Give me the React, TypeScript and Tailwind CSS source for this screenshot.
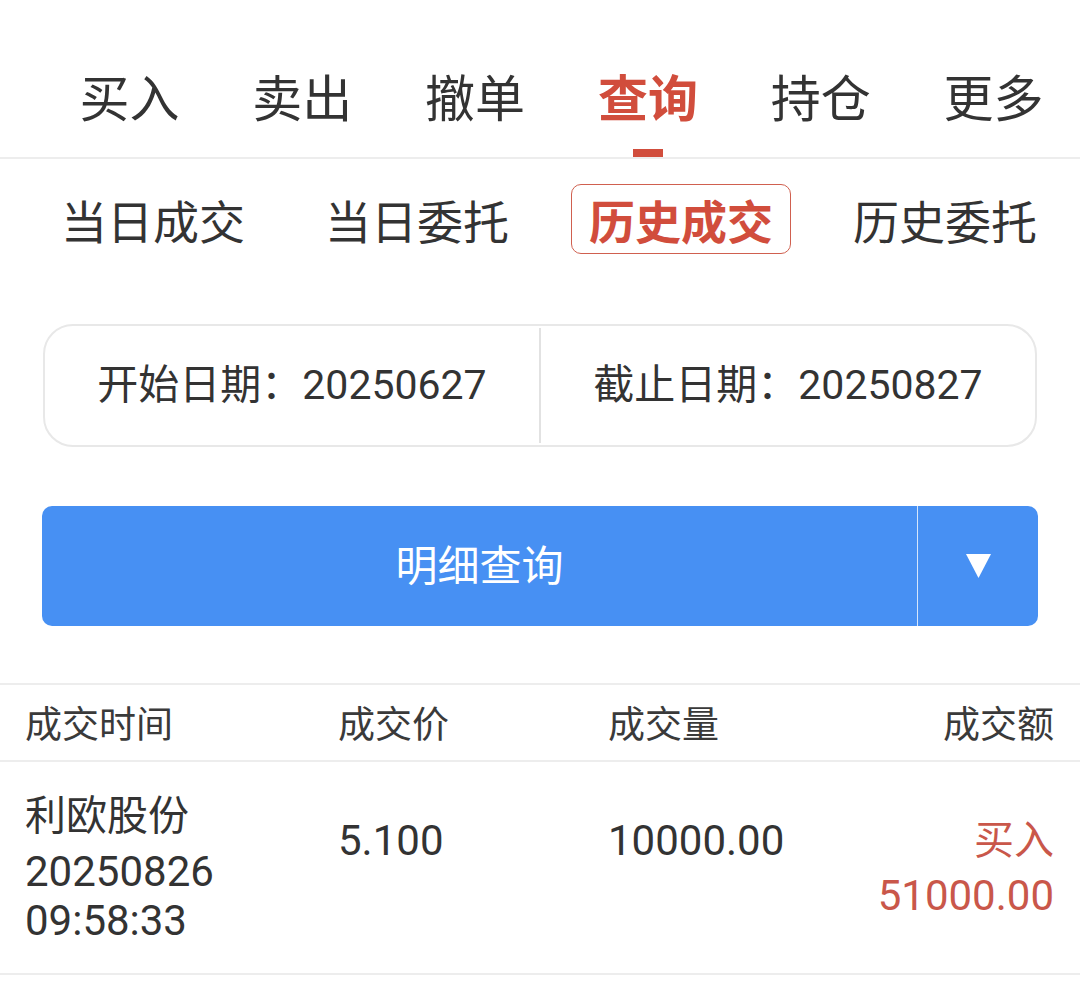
const mainTabs = ["买入", "卖出", "撤单", "查询", "持仓", "更多"];
const subTabs = ["当日成交", "当日委托", "历史成交", "历史委托"];

const font = { fontFamily: 'Roboto, "Noto Sans CJK SC", sans-serif' };

const App = () => {
    return (
        <div className="w-[1080px] min-h-[983px] bg-white text-[#333333]" style={font}>
            {/* main tabs */}
            <div className="grid grid-cols-6 pl-[43px] border-b-2 border-[#ededed]">
                {mainTabs.map((t) => {
                    const active = t === "查询";
                    return (
                        <div key={t} className="flex flex-col items-center pt-[70px]">
                            <span
                                className={
                                    active
                                        ? "text-[50px] leading-[60px] font-bold text-[#d14d3c]"
                                        : "text-[50px] leading-[60px] text-[#333333]"
                                }
                            >
                                {t}
                            </span>
                            <div className={active ? "mt-[19px] h-[8px] w-[30px] bg-[#d14d3c]" : "mt-[19px] h-[8px] w-[30px]"} />
                        </div>
                    );
                })}
            </div>

            {/* sub tabs */}
            <div className="grid grid-cols-4 pl-[21px] pr-[3px] pt-[25px]">
                {subTabs.map((t) => {
                    const active = t === "历史成交";
                    return (
                        <div key={t} className="flex justify-center">
                            <div
                                className={
                                    active
                                        ? "h-[70px] w-[220px] flex items-center justify-center rounded-[10px] border border-[#d0604f] text-[46px] font-bold text-[#d14d3c]"
                                        : "h-[70px] w-[220px] flex items-center justify-center text-[46px] text-[#333333]"
                                }
                            >
                                <span className="pt-[8px]">{t}</span>
                            </div>
                        </div>
                    );
                })}
            </div>

            {/* date range */}
            <div className="mx-[43px] mt-[70px] h-[123px] flex items-center rounded-[30px] border-2 border-[#e8e8e8]">
                <div className="flex-1 text-center text-[41px]">开始日期：20250627</div>
                <div className="w-[2px] self-stretch my-[2px] bg-[#e2e2e2]" />
                <div className="flex-1 text-center text-[41px]">截止日期：20250827</div>
            </div>

            {/* query button */}
            <div className="mx-[42px] mt-[59px] h-[120px] flex rounded-[10px] bg-[#4790f3] text-white">
                <div className="flex-1 flex items-center justify-center text-[42px]">明细查询</div>
                <div className="w-px bg-[#d6e6fc]" />
                <div className="w-[120px] flex items-center justify-center">
                    <svg width="25" height="24" viewBox="0 0 25 24">
                        <polygon points="0,0 25,0 12.5,24" fill="#ffffff" />
                    </svg>
                </div>
            </div>

            {/* table */}
            <div className="mt-[57px] border-t-2 border-[#ededed]">
                <div className="grid grid-cols-[313px_270px_1fr_auto] px-[25px] pr-[26px] h-[77px] pt-[6px] items-center text-[37px] text-[#3a3a3a] border-b-2 border-[#ededed]">
                    <span>成交时间</span>
                    <span>成交价</span>
                    <span>成交量</span>
                    <span className="text-right">成交额</span>
                </div>
                <div className="grid grid-cols-[313px_270px_1fr_auto] px-[25px] pr-[26px] pt-[28px] pb-[28px] border-b-2 border-[#ededed]">
                    <div className="flex flex-col">
                        <span className="text-[41px] leading-[52px]">利欧股份</span>
                        <span className="mt-[5px] text-[42px] leading-[49px]">20250826</span>
                        <span className="text-[42px] leading-[49px]">09:58:33</span>
                    </div>
                    <div className="pt-[25px] text-[42px] leading-[52px]">5.100</div>
                    <div className="pt-[25px] text-[42px] leading-[52px]">10000.00</div>
                    <div className="pt-[25px] flex flex-col items-end text-[#c9574a]">
                        <span className="text-[40px] leading-[52px]">买入</span>
                        <span className="mt-[3px] text-[42px] leading-[52px]">51000.00</span>
                    </div>
                </div>
            </div>
        </div>
    );
};

export default App;
